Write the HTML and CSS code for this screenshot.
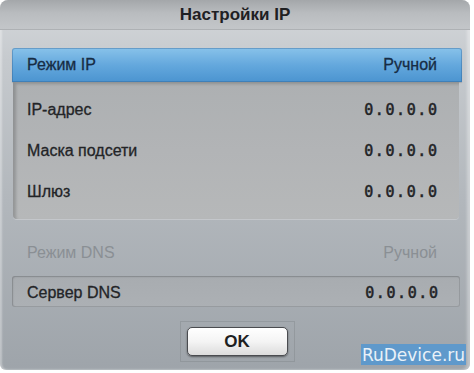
FILE: index.html
```html
<!DOCTYPE html>
<html lang="ru">
<head>
<meta charset="utf-8">
<title>Настройки IP</title>
<link rel="stylesheet" href="styles.css">
</head>
<body>
<div class="dialog">
  <div class="title">Настройки IP</div>
  <div class="content">
    <div class="row selected">
      <span class="label">Режим IP</span>
      <span class="text-value">Ручной</span>
    </div>
    <div class="panel">
      <div class="row">
        <span class="label">IP-адрес</span>
        <span class="ip">0.0.0.0</span>
      </div>
      <div class="row">
        <span class="label">Маска подсети</span>
        <span class="ip">0.0.0.0</span>
      </div>
      <div class="row">
        <span class="label">Шлюз</span>
        <span class="ip">0.0.0.0</span>
      </div>
    </div>
    <div class="row disabled">
      <span class="label">Режим DNS</span>
      <span class="text-value">Ручной</span>
    </div>
    <div class="panel dns">
      <div class="row">
        <span class="label">Сервер DNS</span>
        <span class="ip">0.0.0.0</span>
      </div>
    </div>
    <div class="actions">
      <div class="focus-frame">
        <button class="ok">OK</button>
      </div>
    </div>
  </div>
  <div class="watermark">RuDevice.ru</div>
</div>
</body>
</html>
```
FILE: styles.css
```css
* { box-sizing: border-box; }

body {
  margin: 0;
  background: #ffffff;
  font-family: "Liberation Sans", Arial, sans-serif;
}

.dialog {
  position: relative;
  width: 470px;
  height: 370px;
  border-radius: 8px 8px 6px 6px;
  overflow: hidden;
  display: flex;
  flex-direction: column;
  background: linear-gradient(to bottom, #d5d8db 0px, #c6cace 60px, #b2b7bc 200px, #9ea4aa 370px);
  box-shadow: inset 2px 0 2px rgba(255,255,255,0.35), inset -3px 0 3px rgba(255,255,255,0.35);
}

.title {
  height: 30px;
  flex: none;
  display: flex;
  align-items: center;
  justify-content: center;
  font-weight: bold;
  font-size: 17px;
  color: #1f2023;
  background: linear-gradient(to bottom, #a4a7aa 0%, #b9bcbf 45%, #c3c6c9 100%);
  border-bottom: 1px solid #aeb1b4;
}

.content {
  padding: 18px 8px 0 12px;
  display: flex;
  flex-direction: column;
}

.row {
  display: flex;
  justify-content: space-between;
  align-items: center;
  height: 41px;
  padding: 0 25px 0 15px;
  font-size: 16px;
  color: #232427;
  -webkit-text-stroke: 0.3px currentColor;
}

.selected {
  height: 34px;
  border-radius: 3px 3px 0 0;
  color: #172c44;
  background: linear-gradient(to bottom, #88c2ea 0%, #64a8dd 50%, #4b94d0 100%);
  box-shadow: inset 0 0 0 1px rgba(40,90,140,0.35), 0 1px 1px rgba(0,0,0,0.15);
}

.panel {
  margin: 0 3px 0 1px;
  padding: 7px 0 7px;
  background: linear-gradient(to bottom, #adb0b2 0%, #b2b4b6 50%, #b6b8b9 100%);
  border-radius: 0 0 4px 4px;
  box-shadow: inset 3px 2px 3px rgba(0,0,0,0.18), 0 1px 0 rgba(255,255,255,0.25);
}

.panel .row {
  padding-right: 22px;
  padding-left: 14px;
}

.disabled {
  margin-top: 13px;
  color: #8a8f94;
  -webkit-text-stroke: 0;
}

.dns {
  margin: 3px 2px 0 0;
  padding: 0;
  border-radius: 3px;
  background: linear-gradient(to bottom, #a8acb0 0%, #acb0b4 100%);
  box-shadow: inset 0 0 0 1px rgba(90,95,100,0.25), inset 1px 1px 2px rgba(0,0,0,0.12);
}

.dns .row {
  height: 31px;
  padding-left: 15px;
  padding-top: 2px;
}

.ip {
  font-family: "DejaVu Sans Mono", "Liberation Mono", monospace;
  font-size: 15px;
  letter-spacing: 1.6px;
  margin-right: -1.6px;
  color: #222326;
  -webkit-text-stroke: 0.5px currentColor;
}

.text-value {
  font-size: 16px;
}

.actions {
  display: flex;
  justify-content: center;
  margin-top: 14px;
}

.focus-frame {
  padding: 5px 6px;
  border: 1px solid rgba(120,125,130,0.35);
}

.ok {
  width: 101px;
  height: 29px;
  border: 1px solid #4a4c50;
  border-radius: 5px;
  background: linear-gradient(to bottom, #ffffff 0%, #f4f4f4 50%, #dcdcdc 100%);
  box-shadow: 0 1px 2px rgba(0,0,0,0.45);
  font-family: "Liberation Sans", Arial, sans-serif;
  font-weight: bold;
  font-size: 17px;
  color: #1e1f22;
  padding: 0;
}

.watermark {
  position: absolute;
  left: 361px;
  top: 344px;
  width: 105px;
  height: 21px;
  display: flex;
  align-items: center;
  justify-content: center;
  background: rgba(84, 150, 208, 0.85);
  color: #e9f1f8;
  font-family: "DejaVu Sans", sans-serif;
  font-size: 17px;
}
```
